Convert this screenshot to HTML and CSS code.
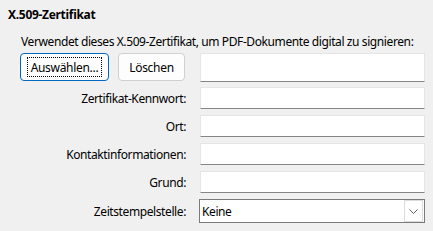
FILE: index.html
```html
<!DOCTYPE html>
<html lang="de">
<head>
    <meta charset="UTF-8">
    <title>X.509-Zertifikat</title>
    <link rel="stylesheet" href="styles.css">
</head>
<body>
    <div class="panel">
        <h1 class="title">X.509-Zertifikat</h1>
        <p class="intro">Verwendet dieses X.509-Zertifikat, um PDF-Dokumente digital zu signieren:</p>
        <div class="form">
            <div class="buttons">
                <button class="btn btn-default"><span class="focus">Auswählen...</span></button>
                <button class="btn">Löschen</button>
            </div>
            <div class="field tall"></div>

            <label class="label">Zertifikat-Kennwort:</label>
            <div class="field"></div>

            <label class="label">Ort:</label>
            <div class="field"></div>

            <label class="label">Kontaktinformationen:</label>
            <div class="field"></div>

            <label class="label">Grund:</label>
            <div class="field"></div>

            <label class="label">Zeitstempelstelle:</label>
            <div class="combo">
                <span class="combo-text">Keine</span>
                <span class="combo-btn">
                    <svg width="9" height="5" viewBox="0 0 9 5"><path d="M0.5 0.5 L4.5 4.5 L8.5 0.5" fill="none" stroke="#606060" stroke-width="1"/></svg>
                </span>
            </div>
        </div>
    </div>
</body>
</html>
```

FILE: styles.css
```css
body {
    margin: 0;
    background-color: #f0f0f0;
    font-family: "Noto Sans", sans-serif;
    font-size: 12px;
    letter-spacing: -0.4px;
    color: #000;
    white-space: nowrap;
}
.panel {
    padding: 6px 0 0 8px;
}
.title {
    margin: 0;
    font-size: 12px;
    font-weight: bold;
    letter-spacing: -0.3px;
    line-height: 17px;
}
.intro {
    margin: 10px 0 0 13px;
    line-height: 17px;
}
.form {
    display: grid;
    grid-template-columns: 178px 225px;
    grid-template-rows: 28px 22px 22px 22px 22px 24px;
    column-gap: 14px;
    row-gap: 6px;
    margin-top: 3px;
}
.buttons {
    display: flex;
    justify-content: flex-end;
    gap: 9px;
    margin-right: 1px;
    margin-bottom: 1px;
}
.btn {
    font-family: inherit;
    font-size: 12px;
    letter-spacing: -0.3px;
    background-color: #fdfdfd;
    border: 1px solid #d0d0d0;
    border-radius: 4px;
    padding: 0;
    width: 67px;
    height: 28px;
    color: #000;
}
.btn-default {
    width: 89px;
    border-color: #0067c0;
}
.focus {
    display: inline-block;
    outline: 1px dotted #000;
    padding: 1px 3px 0;
    line-height: 17px;
}
.label {
    text-align: right;
    align-self: center;
    line-height: 17px;
}
.field {
    background-color: #fff;
    border: 1px solid #e5e5e5;
    border-bottom-color: #868686;
    border-radius: 1px;
}
.field.tall {
    margin-bottom: -1px;
}
.combo {
    display: flex;
    align-items: center;
    background-color: #fff;
    border: 1px solid #7a7a7a;
    margin-left: -1px;
}
.combo-text {
    flex: 1;
    padding-left: 2px;
}
.combo-btn {
    display: flex;
    align-items: center;
    justify-content: center;
    width: 17px;
    height: 20px;
    margin-right: 1px;
    border: 1px solid #dcdcdc;
}
```
